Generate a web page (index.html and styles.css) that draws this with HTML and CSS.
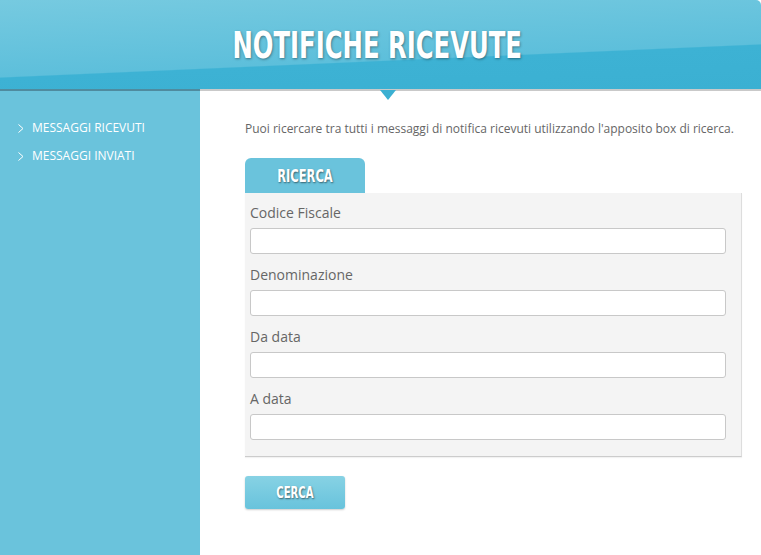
FILE: index.html
```html
<!DOCTYPE html>
<html lang="it">
<head>
    <meta charset="UTF-8">
    <title>Notifiche ricevute</title>
    <link rel="stylesheet" href="styles.css">
</head>
<body>
    <div class="header">
        <h1><span>NOTIFICHE RICEVUTE</span></h1>
        <div class="pointer"></div>
    </div>
    <div class="page">
        <div class="sidebar">
            <ul class="menu">
                <li><svg width="6" height="9" viewBox="0 0 6 9"><polyline points="0.5,0.5 5,4.5 0.5,8.5" fill="none" stroke="#fff" stroke-width="1"/></svg>MESSAGGI RICEVUTI</li>
                <li><svg width="6" height="9" viewBox="0 0 6 9"><polyline points="0.5,0.5 5,4.5 0.5,8.5" fill="none" stroke="#fff" stroke-width="1"/></svg>MESSAGGI INVIATI</li>
            </ul>
        </div>
        <div class="main">
            <p class="intro">Puoi ricercare tra tutti i messaggi di notifica ricevuti utilizzando l'apposito box di ricerca.</p>

            <div class="tab"><span>RICERCA</span></div>
            <div class="search-box">
                <div class="form-group">
                    <label for="cf">Codice Fiscale</label>
                    <input type="text" id="cf">
                </div>
                <div class="form-group">
                    <label for="denominazione">Denominazione</label>
                    <input type="text" id="denominazione">
                </div>
                <div class="form-group">
                    <label for="da-data">Da data</label>
                    <input type="text" id="da-data">
                </div>
                <div class="form-group">
                    <label for="a-data">A data</label>
                    <input type="text" id="a-data">
                </div>
            </div>
            <button type="button" class="btn"><span>CERCA</span></button>
        </div>
    </div>
</body>
</html>
```

FILE: styles.css
```css
html, body {
    margin: 0;
    padding: 0;
    height: 100%;
}
body {
    font-family: "Open Sans", "DejaVu Sans", sans-serif;
    background-color: #ffffff;
    color: #666666;
    overflow: hidden;
}
.header {
    position: relative;
    height: 89px;
    border-top-right-radius: 5px;
    background: linear-gradient(177.5deg, #76cae0 0%, #5dbfdb 63%, #3db2d4 64%, #3bb0d2 100%);
    border-bottom: 2px solid #c9c9c9;
    text-align: center;
}
.header::before {
    /* darker strip of the bottom line over the sidebar */
    content: "";
    position: absolute;
    left: 0;
    bottom: -2px;
    width: 200px;
    height: 2px;
    background-color: #4f8b9f;
}
.header h1 {
    margin: 0;
    padding-top: 24px;
    font-family: "DejaVu Sans Condensed", "DejaVu Sans", sans-serif;
    font-weight: bold;
    font-size: 37px;
    line-height: 44px;
    color: #ffffff;
    text-shadow: 1px 1px 3px rgba(0, 0, 0, 0.4);
}
.header h1 span {
    display: inline-block;
    margin-right: 6px;
    transform: scaleX(0.73);
}
.pointer {
    position: absolute;
    left: 380px;
    bottom: -11px;
    width: 0;
    height: 0;
    border-left: 8px solid transparent;
    border-right: 8px solid transparent;
    border-top: 10px solid #3bb0d2;
}
.page {
    display: flex;
    height: calc(100% - 91px);
}
.sidebar {
    width: 200px;
    flex-shrink: 0;
    background-color: #6ac3dc;
}
.menu {
    list-style: none;
    margin: 0;
    padding: 23px 0 0 18px;
}
.menu li {
    display: flex;
    align-items: center;
    font-size: 12px;
    line-height: 28px;
    color: #ffffff;
}
.menu li svg {
    margin-right: 8px;
}
.main {
    flex: 1;
    padding: 29px 0 0 45px;
}
.intro {
    margin: 0 0 20px;
    font-size: 12px;
    line-height: 18px;
    color: #666666;
}
.tab {
    width: 120px;
    height: 35px;
    background-color: #6ac3dc;
    border-radius: 6px 6px 0 0;
    text-align: center;
}
.tab span,
.btn span {
    display: inline-block;
    font-family: "DejaVu Sans Condensed", "DejaVu Sans", sans-serif;
    font-weight: bold;
    color: #ffffff;
    text-shadow: 1px 1px 2px rgba(0, 0, 0, 0.5);
    transform: scaleX(0.75);
}
.tab span {
    font-size: 17px;
    line-height: 36px;
}
.search-box {
    width: 476px;
    padding: 8px 15px 7px 5px;
    background-color: #f4f4f4;
    border-right: 1px solid #dddddd;
    border-bottom: 1px solid #cccccc;
    box-shadow: 0 1px 1px rgba(0, 0, 0, 0.05);
}
.form-group {
    margin-bottom: 9px;
}
.form-group label {
    display: block;
    font-size: 14px;
    line-height: 20px;
    padding-top: 2px;
    margin-bottom: 5px;
    color: #666666;
}
.form-group input {
    display: block;
    width: 476px;
    height: 26px;
    box-sizing: border-box;
    margin: 0;
    border: 1px solid #c8c8c8;
    border-radius: 3px;
    background-color: #ffffff;
}
.btn {
    display: block;
    margin-top: 19px;
    width: 100px;
    height: 33px;
    padding: 0;
    border: none;
    border-radius: 3px;
    background: linear-gradient(to bottom, #87d2e4, #68c3dc);
    box-shadow: 0 1px 2px rgba(0, 0, 0, 0.2);
    cursor: pointer;
}
.btn span {
    font-size: 15px;
}
```
